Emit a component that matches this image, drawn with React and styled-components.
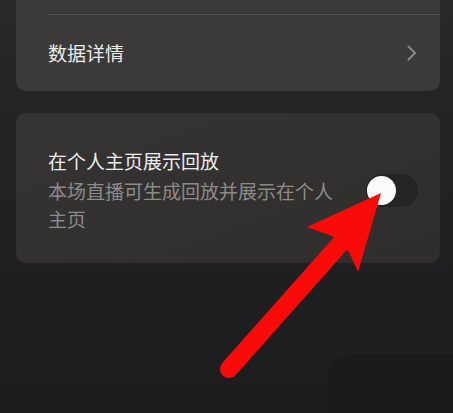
import React from 'react';
import styled, { createGlobalStyle } from 'styled-components';

const GlobalStyle = createGlobalStyle`
  html, body {
    margin: 0;
    padding: 0;
    background: #1e1e20;
  }
  * {
    box-sizing: border-box;
  }
`;

const Screen = styled.div`
  position: relative;
  width: 453px;
  height: 413px;
  overflow: hidden;
  padding: 0 13px 0 16px;
  display: flex;
  flex-direction: column;
  gap: 22px;
  background: linear-gradient(180deg, #2a2827 0%, #242221 35%, #1f1f21 70%, #1d1d1f 100%);
  font-family: "Noto Sans CJK SC", "Noto Sans", sans-serif;
`;

const Card = styled.div`
  background: ${(p) => p.$bg};
  border-radius: ${(p) => (p.$openTop ? '0 0 10px 10px' : '10px')};
  display: flex;
  flex-direction: column;
`;

const TopSpacer = styled.div`
  height: 15px;
  margin-left: 32px;
  border-bottom: 1px solid rgba(255, 255, 255, 0.12);
`;

const LinkRow = styled.div`
  height: 76px;
  display: flex;
  align-items: center;
  justify-content: space-between;
  padding: 0 22px 0 32px;
`;

const RowLabel = styled.span`
  color: #ececec;
  font-size: 19px;
  line-height: 28px;
`;

const SwitchRow = styled.div`
  display: flex;
  align-items: center;
  gap: 24px;
  padding: 34px 22px 30px 32px;
`;

const TextBlock = styled.div`
  flex: 1;
  display: flex;
  flex-direction: column;
  gap: 2px;
`;

const Title = styled.div`
  color: #ededed;
  font-size: 19px;
  line-height: 28px;
`;

const Subtitle = styled.div`
  color: #8d8b89;
  font-size: 19px;
  line-height: 28px;
`;

const Track = styled.div`
  width: 52px;
  height: 33px;
  border-radius: 17px;
  background: #252424;
  display: flex;
  align-items: center;
  padding-left: 1px;
  flex-shrink: 0;
`;

const Knob = styled.div`
  width: 29px;
  height: 29px;
  border-radius: 50%;
  background: #fbfbfb;
`;

const BottomRow = styled.div`
  display: flex;
  justify-content: flex-end;
  margin-top: 70px;
  margin-right: -40px;
`;

const GhostButton = styled.div`
  width: 152px;
  height: 80px;
  border-radius: 22px;
  background: #1b1b1d;
`;

const ArrowOverlay = styled.svg`
  position: absolute;
  left: 0;
  top: 0;
  pointer-events: none;
`;

const Chevron = () => (
  <svg width="12" height="18" viewBox="0 0 12 18">
    <path d="M2.5 2.5 L9 9 L2.5 15.5" fill="none" stroke="#8a8988" strokeWidth="2" strokeLinecap="round" strokeLinejoin="round" />
  </svg>
);

export default function App() {
  return (
    <>
      <GlobalStyle />
      <Screen>
        <Card $bg="#3b3a39" $openTop>
          <TopSpacer />
          <LinkRow>
            <RowLabel>数据详情</RowLabel>
            <Chevron />
          </LinkRow>
        </Card>

        <Card $bg="linear-gradient(160deg, #363433 0%, #2f2e2d 100%)">
          <SwitchRow>
            <TextBlock>
              <Title>在个人主页展示回放</Title>
              <Subtitle>本场直播可生成回放并展示在个人主页</Subtitle>
            </TextBlock>
            <Track>
              <Knob />
            </Track>
          </SwitchRow>
        </Card>

        <BottomRow>
          <GhostButton />
        </BottomRow>

        <ArrowOverlay width="453" height="413" viewBox="0 0 453 413">
          <line x1="229" y1="369" x2="340" y2="244" stroke="#fb0a0a" strokeWidth="18" strokeLinecap="round" />
          <polygon points="381,193 307,227 332,236 349,252 358,272" fill="#fb0a0a" />
        </ArrowOverlay>
      </Screen>
    </>
  );
}
